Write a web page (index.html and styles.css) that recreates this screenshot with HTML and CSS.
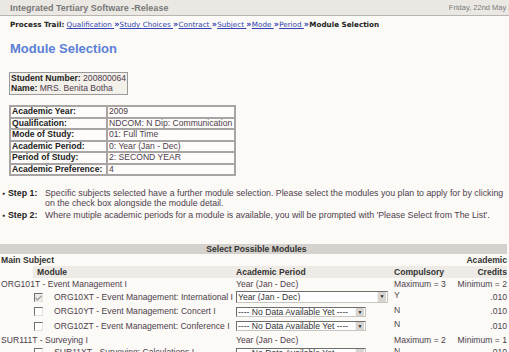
FILE: index.html
```html
<!DOCTYPE html>
<html lang="en">
<head>
  <meta charset="UTF-8">
  <title>Module Selection</title>
  <link rel="stylesheet" href="styles.css">
</head>
<body>
<div class="page">

  <div class="topbar">
    <span class="app-name">Integrated Tertiary Software -Release</span>
    <span class="today">Friday, 22nd May 2009</span>
  </div>

  <div class="trail">
    <b>Process Trail:</b>
    <a href="#">Qualification </a><b class="sep">&raquo;</b>
    <a href="#">Study Choices </a><b class="sep">&raquo;</b>
    <a href="#">Contract </a><b class="sep">&raquo;</b>
    <a href="#">Subject </a><b class="sep">&raquo;</b>
    <a href="#">Mode </a><b class="sep">&raquo;</b>
    <a href="#">Period </a><b class="sep">&raquo;</b>
    <b>Module Selection</b>
  </div>

  <h1>Module Selection</h1>

  <div class="student">
    <div><b>Student Number:</b> 200800064</div>
    <div><b>Name:</b> MRS. Benita Botha</div>
  </div>

  <table class="details">
    <tr><th>Academic Year:</th><td>2009</td></tr>
    <tr><th>Qualification:</th><td>NDCOM: N Dip: Communication</td></tr>
    <tr><th>Mode of Study:</th><td>01: Full Time</td></tr>
    <tr><th>Academic Period:</th><td>0: Year (Jan - Dec)</td></tr>
    <tr><th>Period of Study:</th><td>2: SECOND YEAR</td></tr>
    <tr><th>Academic Preference:</th><td>4</td></tr>
  </table>

  <div class="steps">
    <span class="bullet">&#9679;</span>
    <b>Step 1:</b>
    <span>Specific subjects selected have a further module selection. Please select the modules you plan to apply for by clicking on the check box alongside the module detail.</span>
    <span class="bullet">&#9679;</span>
    <b>Step 2:</b>
    <span>Where mutiple academic periods for a module is available, you will be prompted with 'Please Select from The List'.</span>
  </div>

  <table class="modules">
    <colgroup>
      <col class="c-indent">
      <col class="c-check">
      <col class="c-name">
      <col class="c-period">
      <col class="c-comp">
      <col>
    </colgroup>
    <tr class="title-row">
      <th colspan="6">Select Possible Modules</th>
    </tr>
    <tr class="head-row">
      <th colspan="5" class="left">Main Subject</th>
      <th class="right">Academic</th>
    </tr>
    <tr class="head-row sub">
      <td></td>
      <th colspan="2" class="left">Module</th>
      <th class="left">Academic Period</th>
      <th class="left">Compulsory</th>
      <th class="right">Credits</th>
    </tr>

    <tr class="subject">
      <td colspan="3">ORG101T - Event Management I</td>
      <td>Year (Jan - Dec)</td>
      <td>Maximum = 3</td>
      <td class="right">Minimum = 2</td>
    </tr>
    <tr class="module">
      <td></td>
      <td class="check"><span class="box checked"><svg width="7" height="7" viewBox="0 0 7 7"><path d="M0.5 3.2 L2.5 5.2 L6.5 1.2 L6.5 2.8 L2.5 6.6 L0.5 4.8 Z" fill="#8a8a8a"/></svg></span></td>
      <td>ORG10XT - Event Management: International I</td>
      <td>
        <span class="combo wide"><select><option>Year (Jan - Dec)</option></select><span class="arrow">&#9660;</span></span>
      </td>
      <td class="flag">Y</td>
      <td class="right">.010</td>
    </tr>
    <tr class="module">
      <td></td>
      <td class="check"><span class="box"></span></td>
      <td>ORG10YT - Event Management: Concert I</td>
      <td>
        <span class="combo"><select><option>---- No Data Available Yet ----</option></select><span class="arrow">&#9660;</span></span>
      </td>
      <td class="flag">N</td>
      <td class="right">.010</td>
    </tr>
    <tr class="module">
      <td></td>
      <td class="check"><span class="box"></span></td>
      <td>ORG10ZT - Event Management: Conference I</td>
      <td>
        <span class="combo"><select><option>---- No Data Available Yet ----</option></select><span class="arrow">&#9660;</span></span>
      </td>
      <td class="flag">N</td>
      <td class="right">.010</td>
    </tr>

    <tr class="subject">
      <td colspan="3">SUR111T - Surveying I</td>
      <td>Year (Jan - Dec)</td>
      <td>Maximum = 2</td>
      <td class="right">Minimum = 1</td>
    </tr>
    <tr class="module">
      <td></td>
      <td class="check"><span class="box"></span></td>
      <td>SUR11XT - Surveying: Calculations I</td>
      <td>
        <span class="combo"><select><option>---- No Data Available Yet ----</option></select><span class="arrow">&#9660;</span></span>
      </td>
      <td class="flag">N</td>
      <td class="right">.010</td>
    </tr>
  </table>

</div>
</body>
</html>
```

FILE: styles.css
```css
html, body {
  margin: 0;
  overflow: hidden;
}
body {
  background-color: #fcfaf6;
  color: #4d404d;
  font-family: "Liberation Sans", Arial, sans-serif;
  font-size: 8.6px;
}
.page {
  width: 535px;
}
.topbar {
  display: flex;
  justify-content: space-between;
  align-items: center;
  height: 15px;
  padding: 0 10px;
  background: #ebe8e4;
  border-bottom: 1px solid #b9b5b2;
}
.app-name {
  font-weight: bold;
  font-size: 9px;
  color: #787878;
}
.today {
  font-size: 7.5px;
  color: #787878;
}
.trail {
  padding: 4px 10px 0;
  font-family: "DejaVu Sans", Verdana, sans-serif;
  font-size: 7.2px;
  color: #222;
}
.trail a {
  color: #3243b0;
}
.trail .sep {
  color: #3243b0;
  font-size: 8px;
  margin-right: -2px;
}
h1 {
  margin: 12px 0 0 10px;
  font-size: 13px;
  color: #5b7fd6;
}
.student {
  display: inline-block;
  margin: 16px 0 0 9px;
  padding: 1px 1px;
  line-height: 9.5px;
  background: #f3efe9;
  border: 1px solid #9a9a9a;
  color: #4d404d;
}
.student b {
  color: #222;
}
.details {
  margin: 10px 0 0 9px;
  width: 227px;
  border: 1px solid #a8a4a4;
  border-spacing: 0;
  background: #fdfcfa;
}
.details th,
.details td {
  border: 1px solid #a8a4a4;
  padding: 0 1px;
  line-height: 9.5px;
  text-align: left;
}
.details th {
  width: 93px;
  color: #222;
}
.steps {
  display: grid;
  grid-template-columns: 6px 37px 1fr;
  width: 507px;
  margin: 12px 0 0 2px;
  row-gap: 2px;
  font-size: 8.8px;
  line-height: 10px;
}
.steps b {
  color: #222;
}
.bullet {
  font-size: 5px;
  color: #222;
}
.modules {
  margin-top: 24px;
  width: 507px;
  table-layout: fixed;
  border-spacing: 0;
}
.c-indent {
  width: 33px;
}
.c-check {
  width: 20px;
}
.c-name {
  width: 182px;
}
.c-period {
  width: 158px;
}
.c-comp {
  width: 53px;
}
.modules td,
.modules th {
  padding: 0 1px;
  line-height: 11px;
  white-space: nowrap;
  overflow: visible;
}
.modules .left {
  text-align: left;
}
.modules .right {
  text-align: right;
  padding-right: 0;
}
.title-row th {
  background: #d5d1cd;
  color: #333;
  line-height: 10px;
  padding-left: 7px;
}
.head-row th {
  color: #333;
  line-height: 12px;
}
.head-row.sub th {
  background: #eeebe6;
}
.head-row.sub th:first-of-type {
  padding-left: 4px;
}
.module td {
  height: 14.5px;
}
.check {
  padding-left: 3px;
}
.box {
  display: inline-block;
  box-sizing: border-box;
  width: 9px;
  height: 9px;
  vertical-align: middle;
  background: #fff;
  border-top: 1px solid #707070;
  border-left: 1px solid #707070;
  border-right: 1px solid #e4e0dc;
  border-bottom: 1px solid #e4e0dc;
}
.box.checked {
  background: #ece9e4;
}
.box svg {
  display: block;
}
.combo {
  display: inline-flex;
  vertical-align: middle;
  width: 130px;
  height: 10px;
  box-sizing: border-box;
  border-top: 1px solid #6d6d6d;
  border-left: 1px solid #6d6d6d;
  border-right: 1px solid #c8c4c0;
  border-bottom: 1px solid #c8c4c0;
  background: #fff;
}
.combo.wide {
  width: 152px;
  height: 12px;
}
.combo select {
  flex: 1;
  min-width: 0;
  appearance: none;
  -webkit-appearance: none;
  border: none;
  background: transparent;
  padding: 0 1px;
  margin: 0;
  font-family: "Liberation Sans", Arial, sans-serif;
  font-size: 8.6px;
  line-height: 8px;
  color: #333;
}
.combo .arrow {
  width: 8px;
  margin: 0 1px 0 0;
  background: #d8d4d0;
  border-left: 1px solid #f4f2f0;
  font-size: 5px;
  line-height: 8px;
  text-align: center;
  color: #222;
}
.flag {
  vertical-align: top;
}
.subject td {
  line-height: 12px;
}
```
